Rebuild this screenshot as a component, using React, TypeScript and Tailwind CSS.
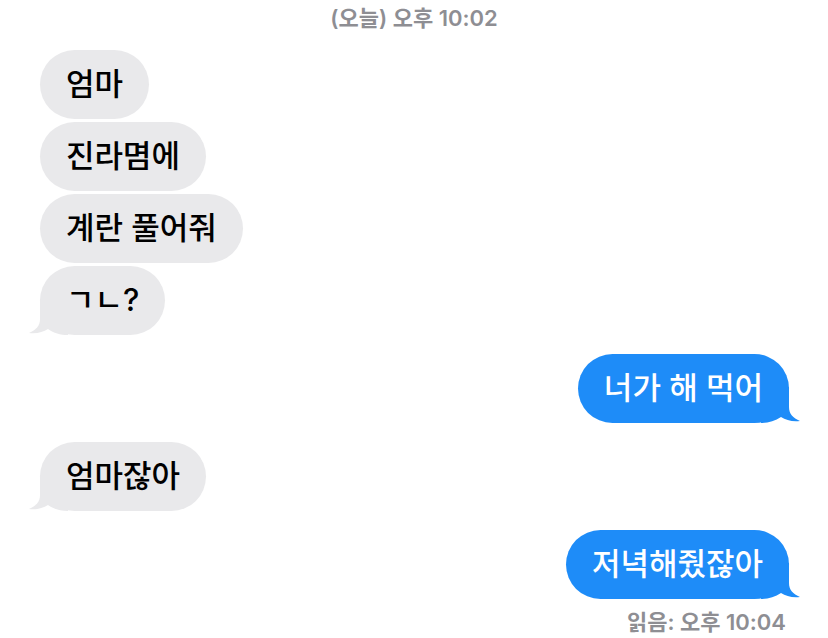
import React from "react";

type Msg = { text: string; me: boolean; tail?: boolean; gapTop?: boolean };

const messages: Msg[] = [
  { text: "엄마", me: false },
  { text: "진라몀에", me: false },
  { text: "계란 풀어줘", me: false },
  { text: "ㄱㄴ?", me: false, tail: true },
  { text: "너가 해 먹어", me: true, tail: true, gapTop: true },
  { text: "엄마잖아", me: false, tail: true, gapTop: true },
  { text: "저녁해줬잖아", me: true, tail: true, gapTop: true },
];

function Tail({ me }: { me: boolean }) {
  // little hook at the bottom corner of the last bubble in a group
  return (
    <svg
      width="40"
      height="36"
      viewBox="0 0 40 36"
      className={
        me
          ? "absolute right-[-12px] bottom-0 scale-x-[-1]"
          : "absolute left-[-12px] bottom-0"
      }
    >
      <path
        d="M12 0 L12 20 C12 27 8 31 1 34 C9 35 15 33 20 30 C26 34 32 36 40 36 L40 0 Z"
        fill={me ? "#1e8cf8" : "#e9e9eb"}
      />
    </svg>
  );
}

function Bubble({ msg }: { msg: Msg }) {
  return (
    <div
      className={`flex ${msg.me ? "justify-end pr-[39px]" : "justify-start pl-[40px]"} ${
        msg.gapTop ? "mt-[16px]" : ""
      }`}
    >
      <div
        className={`relative h-[69px] px-[26px] flex items-center rounded-[35px] text-[31px] font-medium ${
          msg.me ? "bg-[#1e8cf8] text-white" : "bg-[#e9e9eb] text-black"
        }`}
      >
        {msg.tail && <Tail me={msg.me} />}
        <span className="relative">{msg.text}</span>
      </div>
    </div>
  );
}

export default function App() {
  return (
    <div
      className="w-[828px] h-[638px] bg-white overflow-hidden pt-[6px]"
      style={{ fontFamily: '"Inter", "Noto Sans CJK KR", sans-serif' }}
    >
      {/* Timestamp */}
      <div className="h-[24px] leading-[24px] text-center text-[22px] font-semibold text-[#8e8e93]">
        (오늘) 오후 10:02
      </div>

      {/* Messages */}
      <div className="mt-[20px] flex flex-col gap-[3px]">
        {messages.map((m, i) => (
          <Bubble key={i} msg={m} />
        ))}
      </div>

      {/* Read receipt */}
      <div className="mt-[11px] pr-[42px] h-[24px] leading-[24px] text-right text-[22px] font-semibold text-[#8e8e93]">
        읽음: 오후 10:04
      </div>
    </div>
  );
}
